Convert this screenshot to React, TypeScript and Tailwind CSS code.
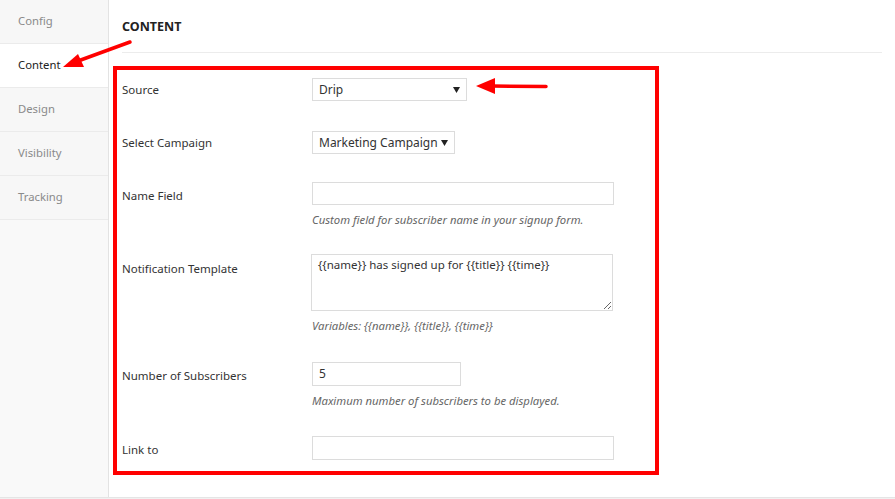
import React from "react";

const TABS = ["Config", "Content", "Design", "Visibility", "Tracking"];
const ACTIVE = "Content";

const font = { fontFamily: '"Noto Sans", "Open Sans", sans-serif' };

function Caret() {
  return (
    <svg width="7" height="6" viewBox="0 0 7 6" className="shrink-0">
      <path d="M0 0 L7 0 L3.5 6 Z" fill="#222" />
    </svg>
  );
}

function FakeSelect({ value, width }: { value: string; width: string }) {
  return (
    <div
      className={`flex h-[23px] ${width} items-center justify-between border border-[#dcdcdc] bg-white pl-[6px] pr-[6px] text-[12px] text-[#333]`}
    >
      <span>{value}</span>
      <Caret />
    </div>
  );
}

function Help({ children, className = "" }: { children: React.ReactNode; className?: string }) {
  return (
    <p className={`text-[11.3px] italic leading-[17px] text-[#666] ${className}`}>{children}</p>
  );
}

export default function App() {
  return (
    <div className="relative h-[499px] w-[895px] overflow-hidden bg-[#f1f1f1]" style={font}>
      <div className="flex h-[498px] border-b border-[#e5e5e5] bg-white">
        {/* Sidebar tabs */}
        <aside className="w-[109px] shrink-0 border-r border-[#e3e3e3] bg-[#f9f9f9]">
          {TABS.map((t) => (
            <div
              key={t}
              className={`flex h-[44px] items-center border-b border-[#ebebeb] pl-[18px] text-[11.3px] ${
                t === ACTIVE ? "bg-white text-[#222]" : "bg-[#f7f7f7] text-[#8a8a8a]"
              }`}
            >
              {t}
            </div>
          ))}
        </aside>

        {/* Main */}
        <main className="flex-1 pl-[4px]">
          <div className="ml-[9px] mr-[13px] flex h-[53px] items-center border-b border-[#ececec] pt-[2px]">
            <h1 className="text-[12.5px] font-bold text-[#222]">CONTENT</h1>
          </div>

          <div className="mt-[13px] w-[546px] border-4 border-[#ff0000] pb-[9px] pl-[5px] pt-[8px] text-[11.5px] text-[#333]">
            {/* Source */}
            <div className="flex">
              <div className="w-[190px] leading-[23px]">Source</div>
              <FakeSelect value="Drip" width="w-[155px]" />
            </div>

            {/* Select Campaign */}
            <div className="mt-[30px] flex">
              <div className="w-[190px] leading-[23px]">Select Campaign</div>
              <FakeSelect value="Marketing Campaign" width="w-[143px]" />
            </div>

            {/* Name Field */}
            <div className="mt-[28px] flex">
              <div className="w-[190px] pt-[2px] leading-[23px]">Name Field</div>
              <div>
                <div className="h-[23px] w-[302px] border border-[#dcdcdc] bg-white" />
                <Help className="mt-[6px]">Custom field for subscriber name in your signup form.</Help>
              </div>
            </div>

            {/* Notification Template */}
            <div className="mt-[26px] flex">
              <div className="w-[189px] pt-[6px] leading-[17px]">Notification Template</div>
              <div>
                <textarea
                  readOnly
                  defaultValue="{{name}} has signed up for {{title}} {{time}}"
                  className="block h-[57px] w-[302px] resize border border-[#dcdcdc] bg-white px-[6px] pt-[1px] text-[11.5px] leading-[17px] text-[#333] outline-none"
                  style={font}
                />
                <Help className="mt-[6px] pl-[1px]">Variables: {"{{name}}, {{title}}, {{time}}"}</Help>
              </div>
            </div>

            {/* Number of Subscribers */}
            <div className="mt-[28px] flex">
              <div className="w-[190px] pt-[2px] leading-[24px]">Number of Subscribers</div>
              <div>
                <div className="flex h-[24px] w-[149px] items-center border border-[#dcdcdc] bg-white px-[6px] text-[12px]">
                  5
                </div>
                <Help className="mt-[6px]">Maximum number of subscribers to be displayed.</Help>
              </div>
            </div>

            {/* Link to */}
            <div className="mt-[27px] flex">
              <div className="w-[190px] pt-[2px] leading-[24px]">Link to</div>
              <div className="h-[24px] w-[302px] border border-[#dcdcdc] bg-white" />
            </div>
          </div>
        </main>
      </div>

      {/* Annotation arrows */}
      <svg className="pointer-events-none absolute left-0 top-0" width="895" height="499">
        <line x1="130" y1="42" x2="78" y2="61" stroke="#ff0000" strokeWidth="3.5" strokeLinecap="round" />
        <polygon points="63,67 78,54 84,67" fill="#ff0000" />
        <line x1="546" y1="86.5" x2="492" y2="86" stroke="#ff0000" strokeWidth="3.5" strokeLinecap="round" />
        <polygon points="476,86 495,78 495,94" fill="#ff0000" />
      </svg>
    </div>
  );
}
